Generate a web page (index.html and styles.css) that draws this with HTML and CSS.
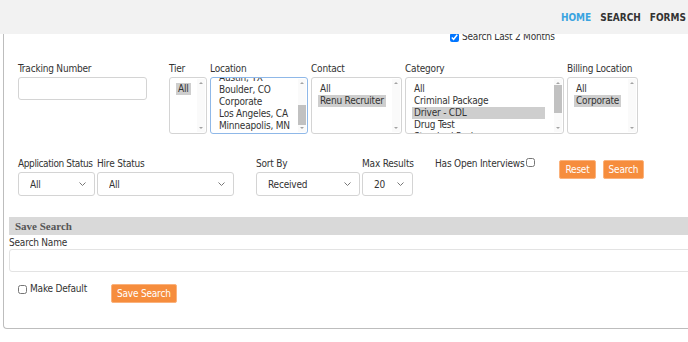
FILE: index.html
```html
<!DOCTYPE html>
<html lang="en">
<head>
    <meta charset="UTF-8">
    <title>Search</title>
    <link rel="stylesheet" href="styles.css">
</head>
<body>
    <header class="topbar">
        <nav class="main-nav">
            <a href="#" class="active">HOME</a>
            <a href="#">SEARCH</a>
            <a href="#">FORMS</a>
        </nav>
    </header>

    <main class="panel">
        <div class="recent-row">
            <label class="check"><input type="checkbox" checked> Search Last 2 Months</label>
        </div>

        <div class="filter-row first-row">
            <div class="field tracking">
                <label>Tracking Number</label>
                <input type="text" class="text-input">
            </div>
            <div class="field tier">
                <label>Tier</label>
                <div class="listbox" role="listbox">
                    <ul class="opts">
                        <li class="sel">All</li>
                    </ul>
                    <div class="sbar"><span class="arr up"></span><span class="track"></span><span class="arr down"></span></div>
                </div>
            </div>
            <div class="field location">
                <label>Location</label>
                <div class="listbox is-focused" role="listbox">
                    <ul class="opts" id="locationList">
                        <li>All</li>
                        <li>Albany, NY</li>
                        <li>Anaheim, CA</li>
                        <li>Atlanta, GA</li>
                        <li>Austin, TX</li>
                        <li>Boulder, CO</li>
                        <li>Corporate</li>
                        <li>Los Angeles, CA</li>
                        <li>Minneapolis, MN</li>
                        <li>New York, NY</li>
                        <li>Phoenix, AZ</li>
                    </ul>
                    <div class="sbar"><span class="arr up"></span><span class="track"><span class="thumb"></span></span><span class="arr down"></span></div>
                </div>
            </div>
            <div class="field contact">
                <label>Contact</label>
                <div class="listbox" role="listbox">
                    <ul class="opts">
                        <li>All</li>
                        <li class="sel">Renu Recruiter</li>
                    </ul>
                    <div class="sbar"><span class="arr up"></span><span class="track"></span><span class="arr down"></span></div>
                </div>
            </div>
            <div class="field category">
                <label>Category</label>
                <div class="listbox" role="listbox">
                    <ul class="opts">
                        <li>All</li>
                        <li>Criminal Package</li>
                        <li class="sel">Driver - CDL</li>
                        <li>Drug Test</li>
                        <li>Standard Package</li>
                        <li>Standard Package Plus</li>
                    </ul>
                    <div class="sbar"><span class="arr up"></span><span class="track"><span class="thumb"></span></span><span class="arr down"></span></div>
                </div>
            </div>
            <div class="field billing">
                <label>Billing Location</label>
                <div class="listbox" role="listbox">
                    <ul class="opts">
                        <li>All</li>
                        <li class="sel">Corporate</li>
                    </ul>
                    <div class="sbar"><span class="arr up"></span><span class="track"></span><span class="arr down"></span></div>
                </div>
            </div>
        </div>

        <div class="filter-row second-row">
            <div class="field app-status">
                <label>Application Status</label>
                <select class="drop"><option>All</option></select>
            </div>
            <div class="field hire-status">
                <label>Hire Status</label>
                <select class="drop"><option>All</option></select>
            </div>
            <div class="field sort-by">
                <label>Sort By</label>
                <select class="drop"><option>Received</option></select>
            </div>
            <div class="field max-results">
                <label>Max Results</label>
                <select class="drop"><option>20</option></select>
            </div>
            <div class="interviews">
                <label class="check">Has Open Interviews <input type="checkbox"></label>
            </div>
            <div class="actions">
                <button class="btn">Reset</button>
                <button class="btn">Search</button>
            </div>
        </div>

        <section class="save-search">
            <h3 class="section-title">Save Search</h3>
            <label class="name-label">Search Name</label>
            <input type="text" class="text-input name-input">
            <div class="save-row">
                <label class="check"><input type="checkbox"> Make Default</label>
                <button class="btn">Save Search</button>
            </div>
        </section>
    </main>
<script src="app.js"></script>
</body>
</html>
```

FILE: styles.css
```css
html, body{
    overflow: hidden;
}

body{
    margin: 0;
    font-family: "DejaVu Sans Condensed", "DejaVu Sans", sans-serif;
    font-stretch: condensed;
    font-size: 10px;
    letter-spacing: -0.2px;
    color: #333;
    background-color: #fff;
}

/* 顶部导航 */
.topbar{
    position: fixed;
    top: 0;
    left: 0;
    right: 0;
    z-index: 10;
    height: 34px;
    background-color: #f2f2f2;
}

.main-nav{
    display: flex;
    justify-content: flex-end;
    gap: 9px;
    padding: 12px 2px 0 0;
}

.main-nav a{
    font-size: 10px;
    font-weight: 700;
    letter-spacing: 0;
    color: #333;
    text-decoration: none;
}

.main-nav a.active{
    color: #3aa4e0;
}

/* 主面板 */
.panel{
    width: 740px;
    margin-left: 3px;
    padding: 31px 0 25px 5px;
    border-left: 1px solid #bdbdbd;
    border-bottom: 1px solid #bdbdbd;
    border-bottom-left-radius: 4px;
}

.check{
    display: inline-flex;
    align-items: center;
    gap: 3px;
    line-height: 12px;
    white-space: nowrap;
}

.check input{
    margin: 0;
    width: 9px;
    height: 9px;
}

.recent-row{
    padding-left: 441px;
    height: 12px;
}

.filter-row{
    display: flex;
    align-items: flex-start;
    padding-left: 9px;
}

.first-row{
    margin-top: 20px;
    gap: 3px;
}

.second-row{
    margin-top: 24px;
    gap: 2px;
}

.field{
    display: flex;
    flex-direction: column;
    gap: 2px;
}

.field label{
    line-height: 12px;
    white-space: nowrap;
}

.text-input{
    box-sizing: border-box;
    height: 23px;
    border: 1px solid #d4d4d4;
    border-radius: 3px;
    background-color: #fff;
}

.tracking{ margin-right: 19px; }
.tracking .text-input{ width: 129px; }

/* 多选列表 */
.listbox{
    box-sizing: border-box;
    display: flex;
    height: 57px;
    border: 1px solid #d4d4d4;
    border-radius: 3px;
    background-color: #fff;
}

.listbox.is-focused{
    border-color: #8fb8e8;
}

.opts{
    flex: 1;
    margin: 0;
    padding: 5px 0 0 6px;
    overflow: hidden;
    list-style: none;
}

.opts li{
    width: fit-content;
    padding: 0 2px;
    line-height: 12px;
    white-space: nowrap;
}

.opts li.sel{
    background-color: #cecece;
}

.is-focused .opts{
    padding-top: 0;
}

.sbar{
    display: flex;
    flex-direction: column;
    width: 8px;
    margin: 1px 1px 1px 0;
    background-color: #fafafa;
}

.sbar .track{
    flex: 1;
}

.sbar .arr{
    display: flex;
    justify-content: center;
    align-items: center;
    height: 8px;
}

.sbar .arr::before{
    content: "";
    border-left: 2px solid transparent;
    border-right: 2px solid transparent;
}

.sbar .up::before{
    border-bottom: 2px solid #a3a3a3;
}

.sbar .down::before{
    border-top: 2px solid #a3a3a3;
}

.sbar .thumb{
    display: block;
    height: 20px;
    background-color: #c1c1c1;
}

.location .sbar .thumb{
    margin-top: 18px;
}

.category .sbar .thumb{
    height: 28px;
    margin-top: -2px;
}

.tier .listbox{ width: 38px; }
.location .listbox{ width: 98px; }
.contact .listbox{ width: 91px; }
.category .listbox{ width: 159px; }
.category .opts li{ width: 129px; }
.billing .listbox{ width: 71px; }

/* 下拉框 */
.drop{
    box-sizing: border-box;
    height: 24px;
    padding: 0 4px 0 11px;
    border: 1px solid #d4d4d4;
    border-radius: 3px;
    appearance: none;
    background: #fff url("data:image/svg+xml,%3Csvg xmlns='http://www.w3.org/2000/svg' width='7' height='4'%3E%3Cpath d='M0.5 0.5L3.5 3.5L6.5 0.5' fill='none' stroke='%23777' stroke-width='1'/%3E%3C/svg%3E") no-repeat right 8px center;
    font-family: inherit;
    font-size: 10px;
    letter-spacing: -0.2px;
    color: #333;
}

.app-status{ width: 77px; }
.app-status label{ letter-spacing: -0.4px; }
.app-status .drop{ width: 77px; }
.hire-status .drop{ width: 137px; }
.sort-by{ margin-left: 20px; }
.sort-by .drop{ width: 104px; }
.max-results{ width: 51px; }
.max-results .drop{ width: 51px; }

.interviews{
    margin-left: 20px;
}

.interviews .check{
    align-items: flex-start;
    gap: 2px;
}

.actions{
    display: flex;
    gap: 7px;
    margin: 2px 0 0 22px;
}

.btn{
    height: 19px;
    padding: 0 5px;
    border: 1px solid #fbb27c;
    border-radius: 2px;
    background-color: #f68d3d;
    font-family: inherit;
    font-size: 10px;
    letter-spacing: -0.2px;
    color: #fff;
    cursor: pointer;
}

.btn:hover{
    background-color: #e97b26;
}

/* 保存搜索 */
.save-search{
    margin-top: 21px;
}

.section-title{
    margin: 0;
    height: 18px;
    padding-left: 6px;
    line-height: 18px;
    font-family: "Liberation Serif", serif;
    font-size: 11px;
    font-weight: 700;
    letter-spacing: 0;
    color: #555;
    background-color: #d9d9d9;
}

.name-label{
    display: block;
    margin-top: 2px;
    line-height: 12px;
}

.name-input{
    display: block;
    width: 100%;
    height: 23px;
    border-color: #e3e3e3;
}

.save-row{
    display: flex;
    align-items: flex-start;
    gap: 24px;
    margin-top: 11px;
    padding-left: 9px;
}

.save-row .btn{
    margin-top: 1px;
}
```

FILE: app.js
```js
// 位置列表滚动，露出 Austin 的下半部分
var locationList = document.getElementById('locationList');
locationList.scrollTop = 54;
```
